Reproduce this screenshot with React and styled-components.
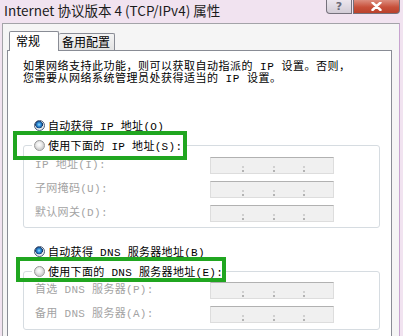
import React from 'react';
import styled, { createGlobalStyle } from 'styled-components';

const bitmapFont = `"Liberation Mono", "Noto Sans CJK SC", monospace`;

const GlobalStyle = createGlobalStyle`
  html, body {
    margin: 0;
    padding: 0;
    background: #f1e3f0;
  }
  body {
    font-family: "Noto Sans CJK SC", sans-serif;
  }
`;

const Window = styled.div`
  width: 403px;
  height: 336px;
  overflow: hidden;
  background: #f1e3f0;
  display: flex;
  flex-direction: column;
`;

const TitleBar = styled.div`
  height: 23px;
  flex: none;
  box-sizing: border-box;
  padding: 0 3px 0 4px;
  display: flex;
  justify-content: space-between;
  align-items: flex-start;
`;

const Title = styled.div`
  margin-top: 1px;
  font-size: 13.5px;
  line-height: 18px;
  color: #1b1b1b;
  white-space: nowrap;
`;

const CaptionButtons = styled.div`
  display: flex;
  gap: 1px;
`;

const CaptionButton = styled.div`
  width: ${p => p.$w}px;
  height: 14px;
  box-sizing: border-box;
  border: 1px solid #75717c;
  border-top: none;
  border-radius: ${p => (p.$close ? '0 0 4px 0' : '0 0 0 4px')};
  background: ${p =>
    p.$close
      ? 'linear-gradient(#dc8d7e, #c8503a 55%, #b9412c)'
      : 'linear-gradient(#ece6ee, #d2ccd6)'};
  display: flex;
  align-items: center;
  justify-content: center;
  color: #6a6a78;
  font: bold 11px/12px "DejaVu Sans", sans-serif;
`;

const DialogBody = styled.div`
  flex: 1;
  margin-left: 2px;
  width: 398px;
  box-sizing: border-box;
  border: 1px solid #a3a3a8;
  border-right-color: #c7a3cf;
  border-bottom: none;
  background: #f5f5f5;
  padding: 7px 0 0 4px;
`;

const TabStrip = styled.div`
  height: 19px;
  padding-left: 2px;
  display: flex;
  align-items: flex-end;
  position: relative;
  z-index: 1;
`;

const Tab = styled.div`
  width: ${p => p.$w}px;
  height: ${p => (p.$active ? 20 : 17)}px;
  margin-bottom: ${p => (p.$active ? -1 : 0)}px;
  box-sizing: border-box;
  border: 1px solid #898c95;
  border-bottom: none;
  ${p => !p.$active && 'border-left: none;'}
  border-radius: 2px 2px 0 0;
  background: ${p => (p.$active ? '#fff' : 'linear-gradient(#f4f4f4, #e3e3e3)')};
  padding-left: ${p => (p.$active ? 6 : 3)}px;
  font-size: 12px;
  line-height: ${p => (p.$active ? 17 : 16)}px;
  color: #000;
  white-space: nowrap;
`;

const TabPanel = styled.div`
  width: 385px;
  height: 300px;
  box-sizing: border-box;
  border: 1px solid #898c95;
  border-bottom: none;
  background: #fff;
  padding: 10px 0 0 15px;
`;

const Intro = styled.p`
  margin: 0 0 30px;
  font-family: ${bitmapFont};
  font-size: 11px;
  line-height: 12px;
  letter-spacing: 0.5px;
  color: #000;
  white-space: nowrap;
`;

const RadioRow = styled.div`
  height: 20px;
  padding-left: 11px;
  margin-top: ${p => p.$mt || 0}px;
  display: flex;
  align-items: center;
`;

const RadioDot = styled.span`
  width: 11px;
  height: 11px;
  flex: none;
  box-sizing: border-box;
  border-radius: 50%;
  border: 1px solid ${p => (p.$checked ? '#4a5b78' : '#9a9a9a')};
  background: ${p =>
    p.$checked
      ? 'radial-gradient(circle at 45% 40%, #9fe0ff 0, #3b9be0 1.5px, #1a5fa8 3px, #16355e 3.6px, #e9ecef 4px)'
      : 'radial-gradient(circle at 45% 40%, #ffffff 0, #ececec 2.5px, #d2d2d2 4.5px)'};
  margin-right: 3px;
`;

const RadioText = styled.span`
  font-family: ${bitmapFont};
  font-size: 11px;
  letter-spacing: 0.3px;
  color: #000;
  white-space: nowrap;
`;

const Group = styled.fieldset`
  margin: 0;
  padding: 0 0 ${p => p.$pb}px;
  width: 357px;
  box-sizing: border-box;
  min-inline-size: 0;
  border: 1px solid #d6dce1;
  border-radius: 3px;
`;

const GroupLegend = styled.legend`
  position: relative;
  height: 20px;
  margin-left: 8px;
  padding: 0 2px;
  display: flex;
  align-items: center;
  background: #fff;

  &::after {
    content: '';
    position: absolute;
    left: ${p => p.$boxLeft}px;
    top: -4px;
    width: ${p => p.$boxW}px;
    height: ${p => p.$boxH}px;
    box-sizing: border-box;
    border: 4px solid #20a620;
    pointer-events: none;
  }
`;

const Fields = styled.div`
  margin-top: ${p => p.$mt}px;
  padding-left: 11px;
  display: grid;
  grid-template-columns: 175px 124px;
  row-gap: 7px;
`;

const FieldLabel = styled.span`
  font-family: ${bitmapFont};
  font-size: 11px;
  line-height: 17px;
  letter-spacing: 0.3px;
  color: #a3a3a3;
  white-space: nowrap;
`;

const IpBox = styled.div`
  height: 17px;
  box-sizing: border-box;
  border: 1px solid #dddddd;
  border-top-color: #b1b1b1;
  background: #f0f0f0;
  padding-left: 3px;
  display: grid;
  grid-template-columns: 1fr 2px 1fr 2px 1fr 2px 1fr;
`;

const IpDot = styled.span`
  position: relative;

  &::before,
  &::after {
    content: '';
    position: absolute;
    left: 0;
    width: 2px;
    height: 2px;
  }
  &::before {
    top: 8px;
    background: #d0d0d0;
  }
  &::after {
    top: 12px;
    background: #b3b3b3;
  }
`;

const IpInput = () => (
  <IpBox>
    <span />
    <IpDot />
    <span />
    <IpDot />
    <span />
    <IpDot />
    <span />
  </IpBox>
);

const Radio = ({ checked, children }) => (
  <>
    <RadioDot $checked={checked} />
    <RadioText>{children}</RadioText>
  </>
);

const CloseIcon = () => (
  <svg width="11" height="9" viewBox="0 0 11 9">
    <path d="M1.5 0.5 L9.5 8 M9.5 0.5 L1.5 8" stroke="#fff" strokeWidth="2.4" strokeLinecap="round" />
  </svg>
);

export default function App() {
  return (
    <>
      <GlobalStyle />
      <Window>
        <TitleBar>
          <Title>Internet 协议版本 4 (TCP/IPv4) 属性</Title>
          <CaptionButtons>
            <CaptionButton $w={26}>?</CaptionButton>
            <CaptionButton $w={47} $close>
              <CloseIcon />
            </CaptionButton>
          </CaptionButtons>
        </TitleBar>

        <DialogBody>
          <TabStrip>
            <Tab $active $w={50}>常规</Tab>
            <Tab $w={56}>备用配置</Tab>
          </TabStrip>

          <TabPanel>
            <Intro>
              如果网络支持此功能，则可以获取自动指派的 IP 设置。否则，
              <br />
              您需要从网络系统管理员处获得适当的 IP 设置。
            </Intro>

            <RadioRow>
              <Radio checked>自动获得 IP 地址(O)</Radio>
            </RadioRow>
            <Group $pb={5}>
              <GroupLegend $boxLeft={-19} $boxW={174} $boxH={29}>
                <Radio>使用下面的 IP 地址(S):</Radio>
              </GroupLegend>
              <Fields $mt={2}>
                <FieldLabel>IP 地址(I):</FieldLabel>
                <IpInput />
                <FieldLabel>子网掩码(U):</FieldLabel>
                <IpInput />
                <FieldLabel>默认网关(D):</FieldLabel>
                <IpInput />
              </Fields>
            </Group>

            <RadioRow $mt={13}>
              <Radio checked>自动获得 DNS 服务器地址(B)</Radio>
            </RadioRow>
            <Group $pb={6}>
              <GroupLegend $boxLeft={-16} $boxW={210} $boxH={25}>
                <Radio>使用下面的 DNS 服务器地址(E):</Radio>
              </GroupLegend>
              <Fields $mt={1}>
                <FieldLabel>首选 DNS 服务器(P):</FieldLabel>
                <IpInput />
                <FieldLabel>备用 DNS 服务器(A):</FieldLabel>
                <IpInput />
              </Fields>
            </Group>
          </TabPanel>
        </DialogBody>
      </Window>
    </>
  );
}
